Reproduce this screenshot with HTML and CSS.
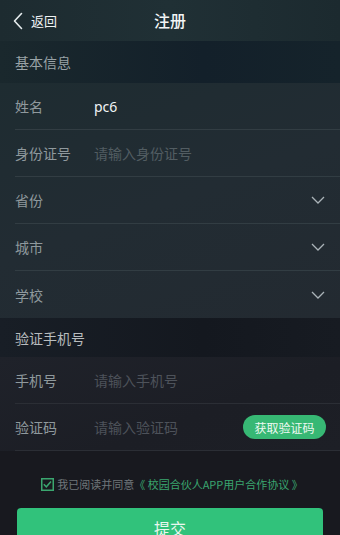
FILE: index.html
```html
<!DOCTYPE html>
<html lang="zh">
<head>
<meta charset="utf-8">
<link rel="stylesheet" href="styles.css">
</head>
<body>
<div class="page">
  <header class="topbar">
    <div class="back">
      <svg class="back-icon" width="10" height="18" viewBox="0 0 10 18"><path d="M8.5 1.5 L1.5 9 L8.5 16.5" fill="none" stroke="#e6ecee" stroke-width="1.6" stroke-linecap="round" stroke-linejoin="round"/></svg>
      <span>返回</span>
    </div>
    <h1 class="title">注册</h1>
  </header>

  <div class="section">基本信息</div>
  <div class="group group-a">
    <div class="row"><span class="label">姓名</span><span class="value">pc6</span></div>
    <div class="row"><span class="label">身份证号</span><span class="ph">请输入身份证号</span></div>
    <div class="row"><span class="label">省份</span><svg class="chev" width="14" height="8" viewBox="0 0 14 8"><path d="M1 1 L7 7 L13 1" fill="none" stroke="#aab3b8" stroke-width="1.3"/></svg></div>
    <div class="row"><span class="label">城市</span><svg class="chev" width="14" height="8" viewBox="0 0 14 8"><path d="M1 1 L7 7 L13 1" fill="none" stroke="#aab3b8" stroke-width="1.3"/></svg></div>
    <div class="row last"><span class="label">学校</span><svg class="chev" width="14" height="8" viewBox="0 0 14 8"><path d="M1 1 L7 7 L13 1" fill="none" stroke="#aab3b8" stroke-width="1.3"/></svg></div>
  </div>

  <div class="section section2">验证手机号</div>
  <div class="group group-b">
    <div class="row"><span class="label">手机号</span><span class="ph">请输入手机号</span></div>
    <div class="row"><span class="label">验证码</span><span class="ph">请输入验证码</span><button class="code-btn">获取验证码</button></div>
  </div>

  <div class="bottom">
    <div class="agree">
      <svg class="check" width="13" height="13" viewBox="0 0 13 13"><rect x="0.75" y="0.75" width="11.5" height="11.5" fill="none" stroke="#3aa66f" stroke-width="1.5"/><path d="M2.8 6.3 L5.3 8.8 L10 3.6" fill="none" stroke="#3aa66f" stroke-width="1.5"/></svg>
      <span class="agree-text">我已阅读并同意</span><span class="agree-link">《 校园合伙人APP用户合作协议 》</span>
    </div>
    <button class="submit">提交</button>
  </div>
</div>
</body>
</html>
```

FILE: styles.css
```css
* { box-sizing: border-box; }
html, body { margin: 0; padding: 0; }
body {
  width: 340px;
  height: 535px;
  overflow: hidden;
  font-family: "Noto Sans CJK SC", "Noto Sans", sans-serif;
  background: #18191f;
}
.page { display: flex; flex-direction: column; height: 535px; }
.page > * { flex-shrink: 0; }
.topbar {
  height: 41px;
  display: flex;
  align-items: center;
  position: relative;
  background: linear-gradient(90deg, #1d2b30, #203035 50%, #1c2a2f);
  color: #f2f5f6;
}
.back {
  display: flex;
  align-items: center;
  gap: 8px;
  padding-left: 13px;
  font-size: 13px;
  color: #eef2f3;
}
.back-icon { display: block; }
.title {
  position: absolute;
  left: 0; right: 0; top: 0;
  margin: 0;
  line-height: 40px;
  text-align: center;
  font-size: 16px;
  font-weight: 500;
  pointer-events: none;
}
.section {
  height: 42px;
  display: flex;
  align-items: center;
  padding-left: 15px;
  font-size: 14px;
  color: #99a3a7;
  background: linear-gradient(90deg, #1a282d, #13202a 60%, #15232b);
}
.section2 {
  height: 39px;
  color: #b8bcbe;
  background: linear-gradient(90deg, #181e26, #14181f 60%, #171b22);
}
.group { padding-left: 15px; }
.group-a { background: linear-gradient(160deg, #1e2c31, #222c33 50%, #232a31); }
.group-b { background: linear-gradient(160deg, #1f222a, #1c1e25 60%, #1d1f26); }
.row {
  height: 47px;
  display: flex;
  align-items: center;
  border-bottom: 1px solid #323d43;
  font-size: 14px;
  padding-right: 15px;
}
.row.last { border-bottom: none; }
.group-b .row { border-bottom-color: #2b2e35; }
.label { width: 79px; color: #8f999d; flex: none; }
.value { color: #f1f4f5; font-size: 14px; font-family: "Noto Sans", "Noto Sans CJK SC", sans-serif; }
.ph { color: #525d62; font-size: 14px; }
.group-b .ph { color: #4d525a; }
.chev { margin-left: auto; display: block; }
.code-btn {
  margin-left: auto;
  margin-right: -1px;
  height: 24px;
  width: 83px;
  border: none;
  border-radius: 12px;
  background: #37b874;
  color: #eef8f2;
  font-family: inherit;
  font-size: 12px;
  padding: 0;
}
.bottom {
  flex: 1 1 auto;
  background: #18191f;
  display: flex;
  flex-direction: column;
  align-items: center;
  padding-top: 25px;
}
.agree {
  display: flex;
  align-items: center;
  font-size: 11px;
  height: 16px;
  flex: none;
  margin-left: 4px;
}
.check { display: block; margin-right: 3px; }
.agree-text { color: #70767a; }
.agree-link { color: #3aa66f; }
.submit {
  flex: none;
  margin-top: 16px;
  width: 306px;
  height: 40px;
  border: none;
  border-radius: 4px;
  background: #31c27b;
  color: #eaf7ef;
  font-family: inherit;
  font-size: 16px;
  padding: 0;
}
```
